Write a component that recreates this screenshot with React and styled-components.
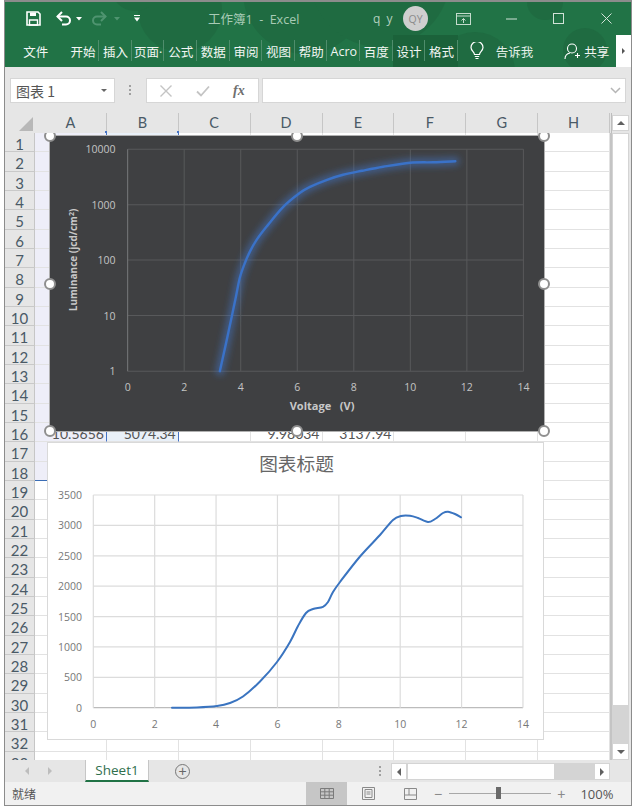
import React from 'react';
import styled, { createGlobalStyle } from 'styled-components';

const GlobalStyle = createGlobalStyle`
  html, body {
    margin: 0;
    padding: 0;
    background: #fff;
    overflow: hidden;
  }
  * { box-sizing: border-box; }
  body { font-family: "Noto Sans CJK SC", "Open Sans", sans-serif; }
`;

const Window = styled.div`
  width: 628px;
  height: 806px;
  margin-left: 4px;
  border: 1px solid #8c8c8c;
  border-top-width: 2px;
  display: flex;
  flex-direction: column;
  background: #e6e6e6;
`;

/* ---------- title bar + ribbon ---------- */
const Header = styled.header`
  position: relative;
  height: 65px;
  flex: none;
  background: #217346;
  overflow: hidden;
`;

const Blobs = styled.svg`
  position: absolute;
  inset: 0;
`;

const TitleRow = styled.div`
  position: relative;
  height: 33px;
  display: flex;
  align-items: center;
  padding-left: 21px;
`;

const QuickIcon = styled.svg`
  flex: none;
  margin-left: ${p => p.$ml || 0}px;
`;

const Title = styled.div`
  margin-left: 68px;
  width: 165px;
  font-family: "Open Sans", "Noto Sans CJK SC", sans-serif;
  font-size: 12.5px;
  color: #a8cbb6;
  white-space: pre;
`;

const UserName = styled.div`
  font-family: "Open Sans", sans-serif;
  font-size: 12px;
  letter-spacing: 1.5px;
  color: #b3d0bf;
  width: 30px;
`;

const Avatar = styled.div`
  width: 25px;
  height: 25px;
  border-radius: 50%;
  background: #cfcfcf;
  color: #8b8b8b;
  font-family: "Open Sans", sans-serif;
  font-size: 10.5px;
  display: flex;
  align-items: center;
  justify-content: center;
`;

const TabRow = styled.nav`
  position: relative;
  height: 32px;
  display: flex;
  align-items: stretch;
  padding-left: 2px;
  font-family: "Open Sans", "Noto Sans CJK SC", sans-serif;
`;

const FileTab = styled.div`
  width: 60px;
  padding-right: 2px;
  display: flex;
  align-items: center;
  justify-content: center;
  font-size: 12.5px;
  color: #f2f6f3;
`;

const Tab = styled.div`
  width: 32.6px;
  flex: none;
  display: flex;
  align-items: center;
  justify-content: center;
  position: relative;
  white-space: nowrap;
  font-size: 12.5px;
  color: #f2f6f3;
  background: ${p => (p.$context ? '#1b623a' : 'transparent')};

  &::after {
    content: '';
    position: absolute;
    right: 0;
    top: 5px;
    bottom: 6px;
    width: 1px;
    background: #4f8d6c;
  }
`;

const TellMe = styled.div`
  display: flex;
  align-items: center;
  margin-left: 12px;
  font-size: 12.5px;
  color: #e4efe8;
  gap: 12px;
  width: 95px;
`;

const Share = styled.div`
  display: flex;
  align-items: center;
  gap: 4px;
  font-size: 12.5px;
  color: #f2f6f3;
  width: 52px;
`;

const RibbonMore = styled.div`
  width: 15px;
  margin-left: auto;
  background: #fff;
  display: flex;
  align-items: center;
  justify-content: center;
  &::after {
    content: '';
    border-left: 3px solid #555;
    border-top: 3px solid transparent;
    border-bottom: 3px solid transparent;
  }
`;

/* ---------- formula bar ---------- */
const FormulaBar = styled.div`
  height: 46px;
  flex: none;
  display: flex;
  align-items: flex-start;
  padding: 11px 5px 0 5px;
  background: #e6e6e6;
`;

const NameBox = styled.div`
  width: 105px;
  height: 25px;
  background: #fff;
  border: 1px solid #d6d6d6;
  display: flex;
  align-items: center;
  justify-content: space-between;
  padding: 0 7px 0 5px;
  font-size: 14px;
  color: #555;
`;

const Caret = styled.span`
  width: 0;
  height: 0;
  border-left: 3px solid transparent;
  border-right: 3px solid transparent;
  border-top: 3px solid ${p => p.$color || '#666'};
`;

const Dots = styled.div`
  display: flex;
  flex-direction: column;
  gap: 2px;
  width: 2px;
  margin: ${p => p.$margin};
  span { width: 2px; height: 2px; background: #a0a0a0; display: block; }
`;

const FxBox = styled.div`
  width: 113px;
  height: 25px;
  background: #fff;
  border: 1px solid #d6d6d6;
  display: flex;
  align-items: center;
  padding-left: 12px;
`;

const CheckIcon = styled.svg`
  margin-left: 23px;
`;

const FxLabel = styled.span`
  font-family: "Liberation Serif", serif;
  font-style: italic;
  font-weight: 700;
  font-size: 14px;
  color: #6f6f6f;
  margin-left: 23px;
`;

const FormulaInput = styled.div`
  flex: 1;
  height: 25px;
  margin-left: 3px;
  background: #fff;
  border: 1px solid #d6d6d6;
  display: flex;
  align-items: center;
  justify-content: flex-end;
  padding-right: 4px;
`;

/* ---------- sheet ---------- */
const SheetArea = styled.div`
  flex: 1;
  min-height: 0;
  display: flex;
  padding-right: 2px;
`;

const GridColumn = styled.div`
  width: 607px;
  display: flex;
  flex-direction: column;
`;

const ColHeaderRow = styled.div`
  height: 20px;
  flex: none;
  display: grid;
  grid-template-columns: 30px repeat(8, 71.875px);
  background: #e6e6e6;
  border-right: 1px solid #bdbdbd;
`;

const Corner = styled.div`
  display: flex;
  justify-content: flex-end;
  align-items: flex-end;
  padding: 0 2px 2px 0;
  &::after {
    content: '';
    border-left: 14px solid transparent;
    border-bottom: 14px solid #b8b8b8;
  }
`;

const ColHeader = styled.div`
  position: relative;
  font-family: Lato, sans-serif;
  font-size: 14.5px;
  line-height: 20px;
  text-align: center;
  color: #4a5a66;
  border-right: 1px solid #c6c6c6;
  ${p => p.$marked && `
    &::after {
      content: '';
      position: absolute;
      right: -1px;
      bottom: 0;
      width: 2px;
      height: 2px;
      background: #4472c4;
    }
  `}
`;

const Rows = styled.div`
  position: relative;
  flex: 1;
  min-height: 0;
  overflow: hidden;
  background: #fff;
  border-right: 2px solid #c4c4c4;
`;

const Row = styled.div`
  height: ${p => p.$h}px;
  display: grid;
  grid-template-columns: 30px repeat(8, 71.875px);
  grid-template-rows: minmax(0, 1fr);
`;

const RowHeader = styled.div`
  background: #e6e6e6;
  border-bottom: 1px solid #c9c9c9;
  border-right: 1px solid #c6c6c6;
  font-family: Lato, sans-serif;
  font-size: 15px;
  line-height: 22px;
  text-align: center;
  color: #4a5a66;
`;

const Cell = styled.div`
  border-right: 1px solid ${p => (p.$edge ? '#4472c4' : '#e2e2e2')};
  border-bottom: 1px solid ${p => (p.$endRange ? '#3a6db5' : '#e2e2e2')};
  background: ${p => p.$fill || '#fff'};
  font-family: Lato, sans-serif;
  font-size: 14px;
  line-height: 21px;
  text-align: right;
  padding-right: 2px;
  color: #555;
`;

const ChartFrame = styled.div`
  position: absolute;
  left: ${p => p.$x}px;
  top: ${p => p.$y}px;
  width: ${p => p.$w}px;
  height: ${p => p.$h}px;
  background: ${p => (p.$dark ? '#3f4042' : '#fff')};
  border: ${p => (p.$dark ? '1.5px solid #b0b0b0' : '1px solid #d9d9d9')};
`;

const ChartSvg = styled.svg`
  display: block;
  position: absolute;
  left: 0;
  top: 0;
  width: 100%;
  height: 100%;
`;

const Handle = styled.span`
  position: absolute;
  left: ${p => p.$x}%;
  top: ${p => p.$y}%;
  width: 12px;
  height: 12px;
  margin: -6px 0 0 -6px;
  border-radius: 50%;
  background: #fff;
  border: 2px solid #8f8f8f;
`;

/* ---------- scrollbars ---------- */
const VScroll = styled.div`
  width: 17px;
  display: flex;
  flex-direction: column;
  padding-top: 2px;
`;

const ScrollBtn = styled.div`
  height: ${p => p.$h || 16}px;
  width: ${p => p.$w || 17}px;
  flex: none;
  background: #fff;
  border: 1px solid #d4d4d4;
  display: flex;
  align-items: center;
  justify-content: center;
`;

const Arrow = styled.span`
  width: 0;
  height: 0;
  ${p => p.$dir === 'up' && 'border-left:4px solid transparent;border-right:4px solid transparent;border-bottom:4px solid #606060;'}
  ${p => p.$dir === 'down' && 'border-left:4px solid transparent;border-right:4px solid transparent;border-top:4px solid #606060;'}
  ${p => p.$dir === 'left' && 'border-top:4px solid transparent;border-bottom:4px solid transparent;border-right:4px solid #606060;'}
  ${p => p.$dir === 'right' && 'border-top:4px solid transparent;border-bottom:4px solid transparent;border-left:4px solid #606060;'}
`;

const VThumb = styled.div`
  flex: 1;
  margin-top: 2px;
  background: #fff;
  border: 1px solid #d4d4d4;
`;

const VTrack = styled.div`
  height: 37px;
  flex: none;
  background: #d4d4d4;
`;

/* ---------- sheet tabs ---------- */
const TabsBar = styled.div`
  height: 22px;
  flex: none;
  display: flex;
  align-items: stretch;
  background: #e6e6e6;
`;

const NavArrows = styled.div`
  width: 80px;
  display: flex;
  align-items: center;
  padding-left: 20px;
  gap: 19px;
  span {
    width: 0;
    height: 0;
    border-top: 4px solid transparent;
    border-bottom: 4px solid transparent;
  }
  span:first-child { border-right: 4px solid #bdbdbd; }
  span:last-child { border-left: 4px solid #bdbdbd; }
`;

const SheetTab = styled.div`
  width: 64px;
  background: #fff;
  border-bottom: 2px solid #217346;
  border-left: 1px solid #c6c6c6;
  border-right: 1px solid #c6c6c6;
  font-family: "Open Sans", sans-serif;
  font-size: 13.5px;
  line-height: 20px;
  text-align: center;
  color: #2f6f4d;
`;

const AddSheet = styled.div`
  width: 15px;
  height: 15px;
  margin: 4px 0 0 26px;
  border-radius: 50%;
  border: 1px solid #777;
  color: #666;
  font-family: "Liberation Sans", sans-serif;
  font-size: 14px;
  line-height: 12px;
  text-align: center;
`;

const HScroll = styled.div`
  width: 219px;
  height: 17px;
  margin: 3px 0 0 0;
  display: flex;
`;

const HThumb = styled.div`
  width: 148px;
  background: #fff;
  border: 1px solid #d4d4d4;
`;

const HTrack = styled.div`
  flex: 1;
  background: #d4d4d4;
`;

/* ---------- status bar ---------- */
const StatusBar = styled.footer`
  height: 23px;
  flex: none;
  display: flex;
  align-items: center;
  background: #f1f1f1;
  font-size: 12px;
  color: #555;
`;

const StatusText = styled.div`
  width: 301px;
  padding-left: 7px;
`;

const ViewBtn = styled.div`
  width: ${p => p.$w}px;
  height: 100%;
  flex: none;
  display: flex;
  align-items: center;
  justify-content: center;
  background: ${p => (p.$active ? '#c6c6c6' : 'transparent')};
`;

const ZoomSlider = styled.div`
  display: flex;
  align-items: center;
  margin-left: 3px;
  color: #8a8a8a;
  font-family: "Liberation Sans", sans-serif;
  font-size: 14px;
`;

const SliderTrack = styled.div`
  position: relative;
  width: 102px;
  height: 1px;
  margin: 0 6px 0 7px;
  background: #a8a8a8;
  &::after {
    content: '';
    position: absolute;
    left: 47px;
    top: -6px;
    width: 5px;
    height: 12px;
    background: #6a6a6a;
  }
`;

const ZoomValue = styled.div`
  margin-left: 15px;
  font-family: "Open Sans", sans-serif;
  font-size: 13px;
  color: #555;
`;

/* ---------- chart data, page coordinates ---------- */
const LUMINANCE = [
  [220, 371], [226, 344], [232, 316], [236, 297], [240, 277.5], [245, 263], [250, 251.7],
  [256.7, 240], [266.7, 226.7], [283.3, 207], [300, 193], [310, 187], [327, 180], [343, 175],
  [362, 171], [383, 167], [410, 163], [433, 162.5], [455, 161.5],
];

const CURRENT = [
  [172, 707.7], [197, 707.4], [217, 706], [230, 703], [243, 696.5], [260, 681.5], [277, 662],
  [290, 642], [298, 626], [306, 613], [313, 609], [323, 606.8], [328, 602], [333, 592],
  [340, 582], [360, 556.5], [380, 535], [393, 520], [401, 516], [410, 515.8], [418, 518],
  [428, 522], [435, 519], [443, 513], [448, 511.7], [455, 514], [461, 517.3],
];

// catmull-rom through the points
function smooth(pts) {
  let d = `M${pts[0][0]} ${pts[0][1]}`;
  for (let i = 0; i < pts.length - 1; i++) {
    const p0 = pts[i - 1] || pts[i];
    const p1 = pts[i];
    const p2 = pts[i + 1];
    const p3 = pts[i + 2] || p2;
    const c1x = p1[0] + (p2[0] - p0[0]) / 6;
    const c1y = p1[1] + (p2[1] - p0[1]) / 6;
    const c2x = p2[0] - (p3[0] - p1[0]) / 6;
    const c2y = p2[1] - (p3[1] - p1[1]) / 6;
    d += ` C${c1x} ${c1y} ${c2x} ${c2y} ${p2[0]} ${p2[1]}`;
  }
  return d;
}

const HANDLES = [[0, 0], [50, 0], [100, 0], [0, 50], [100, 50], [0, 100], [50, 100], [100, 100]];
const CHART_FONT = '"Open Sans", sans-serif';

function LuminanceChart() {
  const xs = [0, 2, 4, 6, 8, 10, 12, 14];
  const ys = [['10000', 149.5], ['1000', 205], ['100', 260], ['10', 315.5], ['1', 371]];
  return (
    <ChartFrame $dark $x={44} $y={2} $w={496} $h={297}>
      <ChartSvg viewBox="50.5 136.5 493 294">
        <defs>
          <filter id="glow" x="-20%" y="-20%" width="140%" height="140%">
            <feGaussianBlur stdDeviation="3" />
          </filter>
        </defs>
        {ys.map(([t, y]) => (
          <g key={t}>
            <line x1="128" x2="523" y1={y} y2={y} stroke="#58595b" strokeWidth="1" />
            <text x="116" y={y + 4} textAnchor="end" fontFamily={CHART_FONT} fontSize="10.5" fill="#c4c4c4">{t}</text>
          </g>
        ))}
        {xs.map(v => {
          const x = 128 + v * 28.21;
          return (
            <g key={v}>
              <line x1={x} x2={x} y1="149.5" y2="371" stroke={v === 0 ? '#77787a' : '#58595b'} strokeWidth="1" />
              <text x={x} y="391" textAnchor="middle" fontFamily={CHART_FONT} fontSize="10.5" fill="#c4c4c4">{v}</text>
            </g>
          );
        })}
        <path d={smooth(LUMINANCE)} fill="none" stroke="#3f73c4" strokeOpacity="0.5" strokeWidth="9" strokeLinecap="round" filter="url(#glow)" />
        <path d={smooth(LUMINANCE)} fill="none" stroke="#3a72c8" strokeWidth="2.4" strokeLinecap="round" />
        <text x="322" y="410" textAnchor="middle" fontFamily={CHART_FONT} fontSize="11" fontWeight="700" fill="#c8c8c8" xmlSpace="preserve">Voltage   (V)</text>
        <text transform="translate(77 260) rotate(-90)" textAnchor="middle" fontFamily={CHART_FONT} fontSize="10" fontWeight="700" fill="#c8c8c8">
          Luminance (jcd/cm<tspan dy="-3" fontSize="7">2</tspan><tspan dy="3">)</tspan>
        </text>
      </ChartSvg>
      {HANDLES.map(([x, y]) => <Handle key={`${x}-${y}`} $x={x} $y={y} />)}
    </ChartFrame>
  );
}

function CurrentChart() {
  const xs = [0, 2, 4, 6, 8, 10, 12, 14];
  const ys = [0, 500, 1000, 1500, 2000, 2500, 3000, 3500];
  return (
    <ChartFrame $x={42} $y={309} $w={497} $h={298}>
      <ChartSvg viewBox="48 443 495 296">
        <text x="296.5" y="471" textAnchor="middle" fontFamily='"Noto Sans CJK SC", sans-serif' fontSize="18.7" fill="#666">图表标题</text>
        {ys.map(v => {
          const y = 707.7 - v * 0.06077;
          return (
            <g key={v}>
              <line x1="93.3" x2="523" y1={y} y2={y} stroke={v === 0 ? '#bcbcbc' : '#dcdcdc'} strokeWidth="1.2" />
              <text x="82" y={y + 4} textAnchor="end" fontFamily={CHART_FONT} fontSize="10.5" fill="#777">{v}</text>
            </g>
          );
        })}
        {xs.map(v => {
          const x = 93.3 + v * 30.69;
          return (
            <g key={v}>
              <line x1={x} x2={x} y1="495" y2="707.7" stroke="#dcdcdc" strokeWidth="1.2" />
              <text x={x} y="728" textAnchor="middle" fontFamily={CHART_FONT} fontSize="10.5" fill="#777">{v}</text>
            </g>
          );
        })}
        <path d={smooth(CURRENT)} fill="none" stroke="#3a74c0" strokeWidth="2" strokeLinecap="round" />
      </ChartSvg>
    </ChartFrame>
  );
}

const COLUMNS = ['A', 'B', 'C', 'D', 'E', 'F', 'G', 'H'];
const ROW_16 = { A: '10.5656', B: '5074.34', D: '9.98034', E: '3137.94' };
const ROW_COUNT = 33;

function cellProps(col, row) {
  const props = {};
  if (col === 'A' && row <= 18) props.$fill = '#eeeef8';
  if (col === 'B' && row <= 18) props.$fill = '#e9f0f8';
  if (col === 'A' && row === 18) props.$endRange = true;
  if ((col === 'A' || col === 'B') && row <= 18) props.$edge = true;
  return props;
}

function SheetRows() {
  const rows = [];
  for (let r = 1; r <= ROW_COUNT; r++) {
    // rows are 19.33px on the original, keep them on whole pixels
    const h = Math.round((r * 58) / 3) - Math.round(((r - 1) * 58) / 3);
    rows.push(
      <Row key={r} $h={h}>
        <RowHeader>{r}</RowHeader>
        {COLUMNS.map(c => (
          <Cell key={c} {...cellProps(c, r)}>{r === 16 ? ROW_16[c] : null}</Cell>
        ))}
      </Row>
    );
  }
  return rows;
}

export default function App() {
  const tabs = ['开始', '插入', '页面·', '公式', '数据', '审阅', '视图', '帮助', 'Acro', '百度'];
  return (
    <>
      <GlobalStyle />
      <Window>
        <Header>
          <Blobs width="626" height="65" viewBox="0 0 626 65">
            <g fill="#1f6b41">
              <circle cx="175" cy="8" r="42" />
              <circle cx="300" cy="-10" r="62" />
              <circle cx="375" cy="-25" r="70" />
              <circle cx="130" cy="-15" r="24" />
              <circle cx="580" cy="48" r="22" />
              <circle cx="470" cy="70" r="40" />
              <circle cx="540" cy="0" r="18" />
            </g>
          </Blobs>
          <TitleRow>
            <QuickIcon width="15" height="15" viewBox="0 0 15 15" fill="none">
              <path d="M1 1h11l2 2v11H1z" stroke="#fff" strokeWidth="1.6" />
              <path d="M4 1.5h6v3.5H4z" fill="#fff" />
              <path d="M3.5 9h8v5h-8z" stroke="#fff" strokeWidth="1.4" />
            </QuickIcon>
            <QuickIcon $ml={15} width="16" height="15" viewBox="0 0 16 15" fill="none" stroke="#fff" strokeWidth="2">
              <path d="M1.5 5.5h8.5a4 4 0 0 1 0 8H6" />
              <path d="M6 1L1.5 5.5 6 10" />
            </QuickIcon>
            <QuickIcon $ml={4} width="6" height="4" viewBox="0 0 6 4"><path d="M0 0h6L3 3.5z" fill="#fff" /></QuickIcon>
            <QuickIcon $ml={9} width="16" height="15" viewBox="0 0 16 15" fill="none" stroke="#4f9470" strokeWidth="2">
              <path d="M14.5 5.5H6a4 4 0 0 0 0 8h4" />
              <path d="M10 1l4.500 4.500L10 10" />
            </QuickIcon>
            <QuickIcon $ml={7} width="6" height="4" viewBox="0 0 6 4"><path d="M0 0h6L3 3.500z" fill="#4f9470" /></QuickIcon>
            <QuickIcon $ml={14} width="6" height="7" viewBox="0 0 6 7"><path d="M0 0h6v1H0zM0 2.500h6L3 6.500z" fill="#fff" /></QuickIcon>
            <Title>工作簿1  -  Excel</Title>
            <UserName>q y</UserName>
            <Avatar>QY</Avatar>
            <QuickIcon $ml={28} width="15" height="12" viewBox="0 0 15 12" fill="none" stroke="#c5dccd">
              <rect x="0.500" y="0.500" width="14" height="11" />
              <path d="M0.500 3h14" />
              <path d="M7.500 10V5.500M5.500 7.500l2-2 2 2" />
            </QuickIcon>
            <QuickIcon $ml={35} width="11" height="2" viewBox="0 0 11 2"><path d="M0 1h11" stroke="#d2e3d8" /></QuickIcon>
            <QuickIcon $ml={36} width="11" height="11" viewBox="0 0 11 11" fill="none"><rect x="0.500" y="0.500" width="10" height="10" stroke="#d2e3d8" /></QuickIcon>
            <QuickIcon $ml={37} width="11" height="11" viewBox="0 0 11 11"><path d="M0.500 0.500l10 10M10.500 0.500l-10 10" stroke="#d2e3d8" /></QuickIcon>
          </TitleRow>
          <TabRow>
            <FileTab>文件</FileTab>
            {tabs.map(t => <Tab key={t}>{t}</Tab>)}
            <Tab $context>设计</Tab>
            <Tab $context>格式</Tab>
            <TellMe>
              <svg width="14" height="18" viewBox="0 0 14 18" fill="none" stroke="#fff" strokeWidth="1.200">
                <path d="M4.500 12.500C4.200 10 1 8.500 1 5.500a6 6 0 0 1 12 0c0 3-3.200 4.500-3.500 7z" />
                <path d="M4.800 14.500h4.400M5.500 16.500h3" />
              </svg>
              告诉我
            </TellMe>
            <Share>
              <svg width="16" height="17" viewBox="0 0 16 17" fill="none" stroke="#fff" strokeWidth="1.100">
                <circle cx="8" cy="5.500" r="4.500" />
                <path d="M1 16c0-3.500 2.500-5.500 5-6M11 12.500h5M13.500 10v5" />
              </svg>
              共享
            </Share>
            <RibbonMore />
          </TabRow>
        </Header>

        <FormulaBar>
          <NameBox>图表 1<Caret /></NameBox>
          <Dots $margin="7px 15px 0 14px"><span /><span /><span /></Dots>
          <FxBox>
            <svg width="14" height="14" viewBox="0 0 14 14"><path d="M1.500 1.500l11 11M12.500 1.500l-11 11" stroke="#c4c4c4" strokeWidth="1.400" /></svg>
            <CheckIcon width="14" height="12" viewBox="0 0 14 12" fill="none"><path d="M1 6.500L5 10.500 13 1.500" stroke="#c4c4c4" strokeWidth="1.800" /></CheckIcon>
            <FxLabel>fx</FxLabel>
          </FxBox>
          <FormulaInput>
            <svg width="11" height="7" viewBox="0 0 11 7" fill="none"><path d="M1 1l4.500 4.500L10 1" stroke="#b5b5b5" strokeWidth="1.500" /></svg>
          </FormulaInput>
        </FormulaBar>

        <SheetArea>
          <GridColumn>
            <ColHeaderRow>
              <Corner />
              {COLUMNS.map(c => <ColHeader key={c} $marked={c === 'A' || c === 'B'}>{c}</ColHeader>)}
            </ColHeaderRow>
            <Rows>
              <SheetRows />
              <LuminanceChart />
              <CurrentChart />
            </Rows>
          </GridColumn>
          <VScroll>
            <ScrollBtn><Arrow $dir="up" /></ScrollBtn>
            <VThumb />
            <VTrack />
            <ScrollBtn $h={17}><Arrow $dir="down" /></ScrollBtn>
          </VScroll>
        </SheetArea>

        <TabsBar>
          <NavArrows><span /><span /></NavArrows>
          <SheetTab>Sheet1</SheetTab>
          <AddSheet>+</AddSheet>
          <Dots $margin="6px 10px 0 189px"><span /><span /><span /></Dots>
          <HScroll>
            <ScrollBtn $w={16} $h={17}><Arrow $dir="left" /></ScrollBtn>
            <HThumb />
            <HTrack />
            <ScrollBtn $w={16} $h={17}><Arrow $dir="right" /></ScrollBtn>
          </HScroll>
        </TabsBar>

        <StatusBar>
          <StatusText>就绪</StatusText>
          <ViewBtn $w={41} $active>
            <svg width="14" height="11" viewBox="0 0 14 11" fill="none" stroke="#7a7a7a"><path d="M0.500 0.500h13v10h-13zM0.500 3.800h13M0.500 7.200h13M4.800 0.500v10M9.200 0.500v10" /></svg>
          </ViewBtn>
          <ViewBtn $w={42}>
            <svg width="13" height="13" viewBox="0 0 13 13" fill="none" stroke="#8a8a8a"><path d="M0.500 0.500h12v12h-12zM3 2.500h7v8H3zM4.500 5h4M4.500 7h4" /></svg>
          </ViewBtn>
          <ViewBtn $w={42}>
            <svg width="13" height="12" viewBox="0 0 13 12" fill="none" stroke="#8a8a8a"><path d="M0.500 0.500h12v11h-12zM0.500 7h12M5 0.500V7" /></svg>
          </ViewBtn>
          <ZoomSlider>
            −
            <SliderTrack />
            +
          </ZoomSlider>
          <ZoomValue>100%</ZoomValue>
        </StatusBar>
      </Window>
    </>
  );
}
